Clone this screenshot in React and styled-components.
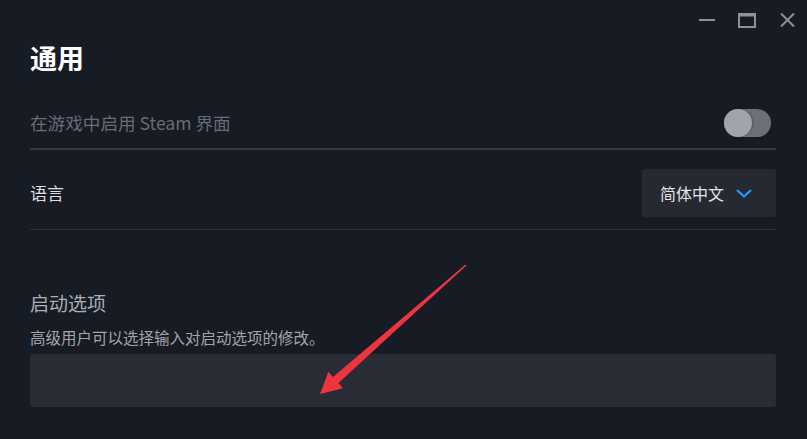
import React from "react";
import styled, { createGlobalStyle } from "styled-components";

const Global = createGlobalStyle`
  html, body { margin: 0; padding: 0; background: #171b24; }
  body { font-family: "Noto Sans CJK SC", "Noto Sans", sans-serif; }
  * { box-sizing: border-box; }
`;

const Window = styled.div`
  position: relative;
  width: 807px;
  height: 439px;
  background: #171b24;
  overflow: hidden;
`;

const TitleBar = styled.div`
  height: 40px;
  display: flex;
  justify-content: flex-end;
  align-items: center;
`;

const WinButton = styled.div`
  width: 40px;
  height: 40px;
  display: flex;
  align-items: center;
  justify-content: center;
  color: #8d9199;
`;

const Content = styled.div`
  padding: 0 31px 0 30px;
`;

const Title = styled.h1`
  margin: 2px 0 0;
  font-size: 27px;
  line-height: 32px;
  font-weight: 700;
  color: #ffffff;
`;

const Row = styled.div`
  display: flex;
  align-items: center;
  justify-content: space-between;
  padding: ${(p) => p.$pad};
  border-bottom: ${(p) => p.$border};
`;

const Label = styled.span`
  font-size: ${(p) => (p.$dim ? "17.6px" : "17px")};
  line-height: 24px;
  color: ${(p) => (p.$dim ? "#676c75" : "#dcdee3")};
`;

const Toggle = styled.div`
  position: relative;
  width: 47px;
  height: 28px;
  margin-right: 5px;
  border-radius: 14px;
  background: #6c7078;
`;

const Knob = styled.div`
  position: absolute;
  left: 0;
  top: 0;
  width: 28px;
  height: 28px;
  border-radius: 50%;
  background: #a0a4ad;
  box-shadow: 1px 0 2px rgba(0, 0, 0, 0.25);
`;

const Dropdown = styled.div`
  width: 134px;
  height: 48px;
  border-radius: 3px;
  background: #262932;
  display: flex;
  align-items: center;
  padding-left: 18px;
  gap: 12px;
  color: #e2e4e8;
  font-size: 16px;
`;

const SectionTitle = styled.div`
  margin-top: 61px;
  font-size: 19px;
  line-height: 24px;
  color: #abaeb4;
`;

const SectionDesc = styled.div`
  margin-top: 12px;
  font-size: 15.5px;
  line-height: 20px;
  color: #a2a5ac;
`;

const Input = styled.div`
  margin-top: 7px;
  height: 53px;
  border-radius: 3px;
  background: #292c35;
`;

const Overlay = styled.svg`
  position: absolute;
  left: 0;
  top: 0;
  pointer-events: none;
`;

export default function App() {
  return (
    <>
      <Global />
      <Window>
        <TitleBar>
          <WinButton>
            <svg width="16" height="16" viewBox="0 0 16 16">
              <rect x="0" y="7" width="16" height="2" fill="currentColor" />
            </svg>
          </WinButton>
          <WinButton>
            <svg width="18" height="15" viewBox="0 0 18 15">
              <rect x="1" y="1.5" width="16" height="12.5" fill="none" stroke="currentColor" strokeWidth="2" />
              <rect x="0" y="0" width="18" height="3.5" fill="currentColor" />
            </svg>
          </WinButton>
          <WinButton>
            <svg width="15" height="14" viewBox="0 0 15 14">
              <path d="M1 0.5 L14 13.5 M14 0.5 L1 13.5" stroke="currentColor" strokeWidth="2" fill="none" />
            </svg>
          </WinButton>
        </TitleBar>
        <Content>
          <Title>通用</Title>
          <Row $pad="35px 0 11px" $border="2px solid #353842">
            <Label $dim>在游戏中启用 Steam 界面</Label>
            <Toggle>
              <Knob />
            </Toggle>
          </Row>
          <Row $pad="19px 0 12px" $border="1px solid #2a2e37">
            <Label>语言</Label>
            <Dropdown>
              <span>简体中文</span>
              <svg width="16" height="9" viewBox="0 0 16 9">
                <path d="M1 1 L8 7.5 L15 1" stroke="#1a9fff" strokeWidth="2.2" fill="none" />
              </svg>
            </Dropdown>
          </Row>
          <SectionTitle>启动选项</SectionTitle>
          <SectionDesc>高级用户可以选择输入对启动选项的修改。</SectionDesc>
          <Input />
        </Content>
        <Overlay width="807" height="439" viewBox="0 0 807 439">
          <polygon
            points="320,394 343,388.2 338.4,383 466.5,265.5 465.5,264.5 333,377 328.4,371.8"
            fill="#ec3540"
          />
        </Overlay>
      </Window>
    </>
  );
}
